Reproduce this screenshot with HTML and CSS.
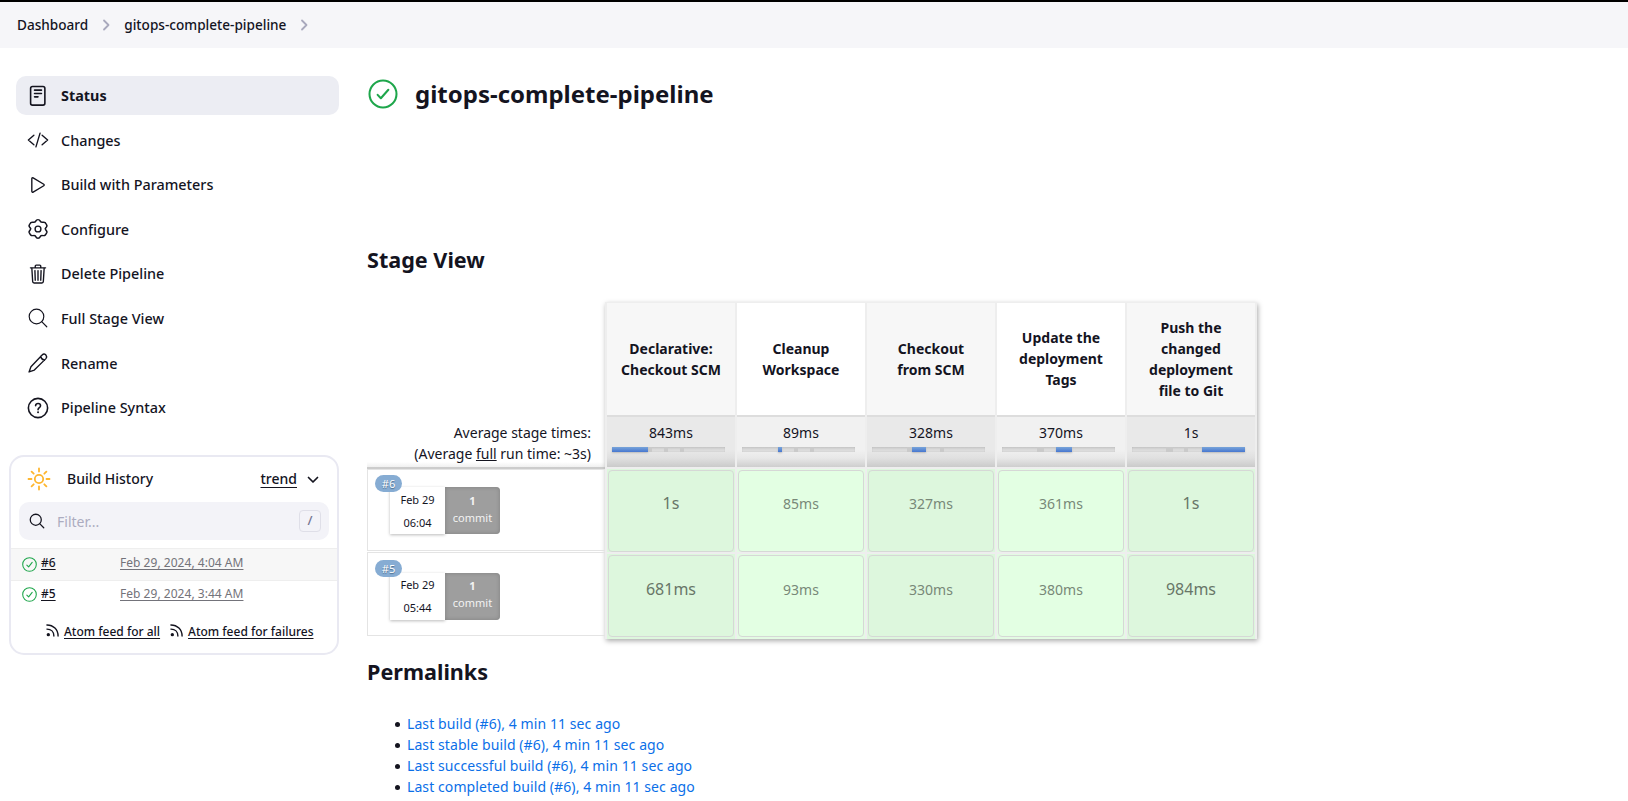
FILE: index.html
```html
<!DOCTYPE html>
<html lang="en">
<head>
<meta charset="utf-8">
<title>gitops-complete-pipeline [Jenkins]</title>
<link rel="stylesheet" href="styles.css">
</head>
<body>
<nav class="breadcrumbs">
  <a>Dashboard</a>
  <svg class="crumb-sep" viewBox="0 0 8 12"><path d="M2 1.500 6.500 6 2 10.500"/></svg>
  <a>gitops-complete-pipeline</a>
  <svg class="crumb-sep" viewBox="0 0 8 12"><path d="M2 1.500 6.500 6 2 10.500"/></svg>
</nav>
<div class="page">
  <aside class="side">
    <div class="tasks">
      <a class="task active"><svg viewBox="0 0 512 512"><rect x="84" y="36" width="332" height="432" rx="44"/><path d="M176 120h160M176 196h160M176 276h80"/></svg>Status</a>
      <a class="task"><svg viewBox="0 0 512 512"><path d="M160 368 32 256l128-112M352 368l128-112-128-112M304 96l-96 320"/></svg>Changes</a>
      <a class="task"><svg viewBox="0 0 512 512"><path d="M112 111v290c0 17.400 17 28.500 31 20.200l247-148c13-7.800 13-26.700 0-34.500l-247-148C129 82.500 112 93.600 112 111z"/></svg>Build with Parameters</a>
      <a class="task"><svg viewBox="0 0 512 512"><path d="M256 32c20 0 34 8 40 25 8 25 23 38 47 35 25-5 43-7 60 12 17 22 28 42 32 64 3 22-9 34-22 48-15 16-15 32 0 48 14 15 25 27 22 50-5 22-15 42-32 62-16 19-35 16-58 12-25-5-41 9-49 33-6 19-21 27-40 27s-34-8-40-27c-8-24-24-38-49-33-23 4-42 7-58-12-17-20-27-40-32-62-3-23 8-35 22-50 15-16 15-32 0-48-13-14-25-26-22-48 4-22 15-42 32-64 17-19 35-17 60-12 24 3 39-10 47-35 6-17 20-25 40-25z" transform="matrix(1.160 0 0 1.040 -41 4)"/><circle cx="256" cy="256" r="68"/></svg>Configure</a>
      <a class="task"><svg viewBox="0 0 512 512"><path d="m112 112 20 320c1 18 14 32 32 32h184c18 0 31-14 32-32l20-320M80 112h352M192 112V72c0-14 10-24 24-24h80c14 0 24 10 24 24v40M256 176v224M184 176l8 224M328 176l-8 224"/></svg>Delete Pipeline</a>
      <a class="task"><svg class="thin" viewBox="0 0 512 512"><circle cx="221" cy="221" r="170"/><path d="m342 342 118 118"/></svg>Full Stage View</a>
      <a class="task"><svg viewBox="0 0 512 512"><path d="M358 62a54 54 0 0 1 82 8c24 30 20 60 0 84L171 420 48 464l44-123zM320 100c8 50 36 80 88 92"/></svg>Rename</a>
      <a class="task"><svg class="bold" viewBox="0 0 512 512"><circle cx="256" cy="256" r="224"/><path d="M200 202c4-35 28-50 58-50 32 0 57 19 57 50 0 48-58 44-58 96"/><circle class="dot" cx="257" cy="356" r="23"/></svg>Pipeline Syntax</a>
    </div>
    <section class="history">
      <header class="history-head">
        <svg class="sun" viewBox="0 0 24 24"><circle cx="12" cy="12" r="4.200"/><path d="M12 1.500v3M12 19.500v3M1.500 12h3M19.500 12h3M4.600 4.600l2.100 2.100M17.300 17.300l2.100 2.100M4.600 19.400l2.100-2.100M17.300 6.700l2.100-2.100"/></svg>
        <span class="history-title">Build History</span>
        <a class="trend">trend</a>
        <svg class="chev" viewBox="0 0 12 8"><path d="M1.500 1.500 6 6l4.500-4.500"/></svg>
      </header>
      <div class="filter">
        <svg viewBox="0 0 512 512"><circle cx="221" cy="221" r="157"/><path d="m338 338 110 110"/></svg>
        <span>Filter...</span><kbd>/</kbd>
      </div>
      <div class="build shaded"><svg viewBox="0 0 28 28"><circle cx="14" cy="14" r="12.700"/><path d="m9 15 3.400 3.500L19 10"/></svg><a>#6</a><a class="date">Feb 29, 2024, 4:04 AM</a></div>
      <div class="build"><svg viewBox="0 0 28 28"><circle cx="14" cy="14" r="12.700"/><path d="m9 15 3.400 3.500L19 10"/></svg><a>#5</a><a class="date">Feb 29, 2024, 3:44 AM</a></div>
      <footer class="feeds">
        <svg viewBox="0 0 14 14"><path d="M1 1c7 0 12 5 12 12M1 5.500c4.500 0 7.500 3 7.500 7.500"/><circle cx="2.500" cy="11.500" r="1.800"/></svg><a>Atom feed for all</a>
        <svg viewBox="0 0 14 14"><path d="M1 1c7 0 12 5 12 12M1 5.500c4.500 0 7.500 3 7.500 7.500"/><circle cx="2.500" cy="11.500" r="1.800"/></svg><a>Atom feed for failures</a>
      </footer>
    </section>
  </aside>
  <main class="main">
    <h1><svg viewBox="0 0 28 28"><circle cx="14" cy="14" r="12.600"/><path d="m9 14.800 3 3.200 7-8"/></svg>gitops-complete-pipeline</h1>
    <h2 class="stage-title">Stage View</h2>
    <div class="stage-view">
      <div class="runs">
        <div class="averages">Average stage times:<br>(Average <u>full</u> run time: ~3s)</div>
        <div class="run"><span class="badge">#6</span><div class="run-box"><div class="when"><span>Feb 29</span><span>06:04</span></div><div class="commits"><b>1</b><span>commit</span></div></div></div>
        <div class="run second"><span class="badge">#5</span><div class="run-box"><div class="when"><span>Feb 29</span><span>05:44</span></div><div class="commits"><b>1</b><span>commit</span></div></div></div>
      </div>
      <div class="stages">
        <div class="stage odd">
          <div class="name">Declarative:<br>Checkout SCM</div>
          <div class="avg">843ms<div class="bar"><i style="left:36px;width:4px"></i><i style="left:52px;width:4px"></i><i style="left:68px;width:4px"></i><b style="left:0;width:36px"></b></div></div>
          <div class="cell first"><span class="big">1s</span></div><div class="cell"><span class="big">681ms</span></div>
        </div>
        <div class="stage">
          <div class="name">Cleanup<br>Workspace</div>
          <div class="avg">89ms<div class="bar"><i style="left:52px;width:4px"></i><i style="left:68px;width:4px"></i><b style="left:36px;width:4px"></b></div></div>
          <div class="cell first"><span>85ms</span></div><div class="cell"><span>93ms</span></div>
        </div>
        <div class="stage odd">
          <div class="name">Checkout<br>from SCM</div>
          <div class="avg">328ms<div class="bar"><i style="left:35px;width:5px"></i><i style="left:68px;width:4px"></i><b style="left:40px;width:14px"></b></div></div>
          <div class="cell first"><span>327ms</span></div><div class="cell"><span>330ms</span></div>
        </div>
        <div class="stage">
          <div class="name up">Update the<br>deployment<br>Tags</div>
          <div class="avg">370ms<div class="bar"><i style="left:35px;width:7px"></i><b style="left:54px;width:16px"></b></div></div>
          <div class="cell first"><span>361ms</span></div><div class="cell"><span>380ms</span></div>
        </div>
        <div class="stage odd">
          <div class="name">Push the<br>changed<br>deployment<br>file to Git</div>
          <div class="avg">1s<div class="bar"><i style="left:34px;width:7px"></i><i style="left:52px;width:4px"></i><b style="left:70px;width:43px"></b></div></div>
          <div class="cell first"><span class="big">1s</span></div><div class="cell"><span class="big">984ms</span></div>
        </div>
      </div>
    </div>
    <h2 class="perma-title">Permalinks</h2>
    <ul class="permalinks">
      <li><a>Last build (#6), 4 min 11 sec ago</a></li>
      <li><a>Last stable build (#6), 4 min 11 sec ago</a></li>
      <li><a>Last successful build (#6), 4 min 11 sec ago</a></li>
      <li><a>Last completed build (#6), 4 min 11 sec ago</a></li>
    </ul>
  </main>
</div>
</body>
</html>
```
FILE: styles.css
```css
* { box-sizing: border-box; }
html { overflow: hidden; }
body {
  margin: 0;
  background: #fff;
  color: #14141f;
  font-family: "Noto Sans", sans-serif;
  font-size: 14px;
  line-height: 21px;
}
svg { fill: none; stroke: currentColor; stroke-linecap: round; stroke-linejoin: round; flex: none; }

.breadcrumbs {
  display: flex;
  align-items: center;
  height: 48px;
  padding: 0 0 2px 17px;
  border-top: 2px solid #000;
  background: #f6f6f9;
  font-size: 13.6px;
  font-weight: 500;
}
.crumb-sep { width: 8px; height: 12px; margin: 2px 14px 0; color: #a9a9bd; stroke-width: 1.8; }

.page { display: flex; }
.side { width: 339px; padding: 28px 0 0; }
.tasks { display: flex; flex-direction: column; gap: 5.6px; padding-left: 16px; }
.task {
  display: flex;
  align-items: center;
  height: 39px;
  padding-left: 11px;
  border-radius: 10px;
  font-size: 14.4px;
  font-weight: 500;
}
.task svg { width: 22px; height: 22px; margin-right: 12px; stroke-width: 32; }
.task .thin { stroke-width: 27; }
.task .bold, .active svg { stroke-width: 37; }
.task .dot { fill: currentColor; stroke: none; }
.active { background: #ecedf3; font-weight: 700; }

.history {
  height: 200px;
  margin: 28px 0 0 9px;
  border: 2px solid #e9e9f2;
  border-radius: 15px;
}
.history-head { display: flex; align-items: center; height: 45px; padding: 0 18px 2px 16px; font-weight: 500; }
.sun { width: 24px; height: 24px; margin-right: 16px; color: #feb62f; stroke-width: 1.8; }
.trend { margin-left: auto; text-decoration: underline; text-underline-offset: 3px; }
.chev { width: 12px; height: 8px; margin: 2px 0 0 10px; stroke-width: 1.7; }
.filter {
  display: flex;
  align-items: center;
  height: 38px;
  margin: 0 8px 8px;
  padding: 0 8px 0 9px;
  border-radius: 10px;
  background: #f3f3f8;
  color: #acacc0;
}
.filter svg { width: 18px; height: 18px; margin-right: 11px; color: #14141f; stroke-width: 36; }
.filter kbd {
  width: 22px;
  height: 22px;
  margin-left: auto;
  border: 1px solid #dfdfe8;
  border-radius: 4px;
  color: #737390;
  font: 500 13px/19px "Noto Sans", sans-serif;
  text-align: center;
}
.build { display: flex; align-items: center; height: 31px; padding: 0 0 7px 11px; font-size: 12px; }
.shaded { height: 33px; padding-bottom: 4px; border: solid #eee; border-width: 1px 0; background: #f7f7f7; }
.build svg { width: 15px; height: 15px; margin: 3px 4px 0 0; color: #1ea64b; stroke-width: 2; }
.build a { width: 79px; text-decoration: underline; text-underline-offset: 2px; }
.build a:not(.date) { font-weight: 500; }
.build .date { width: auto; color: #73737a; letter-spacing: .03px; }
.feeds { display: flex; align-items: center; padding: 9px 0 0 35px; font-size: 12px; font-weight: 500; }
.feeds svg { width: 13px; height: 13px; margin: -3px 5px 0 0; stroke-width: 1.5; }
.feeds circle { fill: currentColor; stroke: none; }
.feeds a { margin-right: 10px; text-decoration: underline; text-underline-offset: 2px; }

.main { padding: 31px 0 0 28px; }
h1 { display: flex; align-items: center; height: 30px; margin: 0; font-size: 24px; line-height: 30px; }
h1 svg { width: 30px; height: 30px; margin: -1px 17px 0 1px; color: #1ea64b; stroke-width: 1.9; }
h2 { margin: 0; font-size: 21.6px; line-height: 30px; }
.stage-title { margin-top: 136px; }

.stage-view { display: flex; margin-top: 27px; }
.runs { width: 238px; padding-top: 114px; }
.averages {
  height: 53px;
  padding: 6px 14px 0 0;
  border-bottom: 2px solid #ccc;
  background: linear-gradient(#fff 90%, #f0f0f0);
  text-align: right;
}
.run { position: relative; height: 82px; margin-bottom: 1px; border: 1px solid #e4e4e4; border-right: 0; }
.second { height: 84px; }
.badge {
  position: absolute;
  top: 5px;
  left: 7px;
  z-index: 1;
  width: 27px;
  height: 17px;
  border-radius: 9px;
  background: #86acd3;
  color: #fff;
  font-size: 11px;
  line-height: 17px;
  text-align: center;
  text-shadow: 0 1px 1px #4a6b8c;
}
.second .badge { top: 7px; }
.run-box { display: flex; width: 110px; height: 47px; margin: 17px 0 0 22px; }
.second .run-box { margin-top: 20px; }
.when {
  display: flex;
  flex-direction: column;
  width: 55px;
  padding-top: 1px;
  box-shadow: 0 1px 3px #bbb;
  font-size: 11px;
  line-height: 23px;
  text-align: center;
}
.second .when { padding-top: 0; }
.commits {
  display: flex;
  flex-direction: column;
  width: 55px;
  padding-top: 5px;
  border-radius: 0 4px 4px 0;
  background: #9e9e9e;
  box-shadow: inset 0 0 4px #808080;
  color: #f3f3f3;
  font-size: 11px;
  line-height: 17px;
  text-align: center;
}
.second .commits { padding-top: 4px; }
.stages {
  display: flex;
  gap: 2px;
  height: 337px;
  padding: 1px 2px;
  background: #eee;
  box-shadow: 1px 2px 5px #aaa;
}
.stage { width: 128px; }
.name {
  display: flex;
  align-items: center;
  justify-content: center;
  height: 114px;
  border-bottom: 2px solid #ddd;
  background: #fff;
  font-weight: 700;
  text-align: center;
}
.up { padding-bottom: 2px; }
.odd .name { background: #f7f7f7; }
.avg {
  height: 50px;
  margin-bottom: 2px;
  padding: 5px 5px 0;
  background: linear-gradient(#f1f1f1 65%, #e8e8e8 82%, #cecece);
  text-align: center;
}
.odd .avg { background: linear-gradient(#e9e9e9 65%, #e0e0e0 82%, #cacaca); }
.bar {
  position: relative;
  width: 113px;
  height: 5px;
  margin-top: 4px;
  background: linear-gradient(#c8c8c8, #dcdcdc 60%);
  box-shadow: inset 0 0 1px #aaa;
}
.bar i, .bar b { position: absolute; top: 0; height: 5px; }
.bar i { background: #cacaca; }
.bar b { background: linear-gradient(#78a4d9, #4777d0); box-shadow: 0 1px 2px #bbb; }
.cell { height: 85px; padding: 1px; background: #e3fbe3; }
.first { border-bottom: 2px solid #eee; }
.odd .cell { background: #ddf7dd; }
.cell span {
  display: flex;
  align-items: center;
  justify-content: center;
  height: 82px;
  padding-bottom: 14px;
  border: 1px solid #d6d8d6;
  border-radius: 4px;
  background: #e3ffe3;
  color: #788878;
}
.first span { padding-bottom: 16px; }
.odd .cell span { background: #ddf7dd; }
.cell .big { color: #687668; font-size: 16px; }

.perma-title { margin-top: 18px; }
.permalinks { margin: 26px 0 0; padding: 0 0 0 28px; list-style: none; }
.permalinks li { display: flex; align-items: center; }
.permalinks li::before {
  content: "";
  width: 5px;
  height: 5px;
  margin: 2px 7px 0 0;
  border-radius: 50%;
  background: #14141f;
}
.permalinks a { color: #0b6fe8; letter-spacing: .09px; }
```
